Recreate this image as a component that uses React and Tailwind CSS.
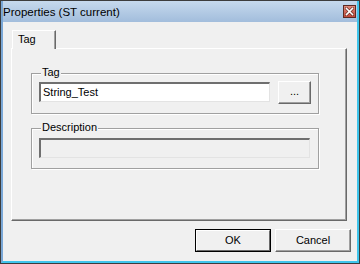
export default function App() {
  const font = { fontFamily: '"Liberation Sans", Arial, sans-serif' };
  return (
    <div className="w-[360px] h-[264px] bg-[#3c3c3c] p-px pr-px" style={font}>
      <div className="w-full h-full flex flex-col border-l-2 border-l-[#7aa7d6] border-r-2 border-r-[#3fc5ec] border-b-2 border-b-[#3fc5ec] bg-[#f0f0f0]">
        {/* Title bar */}
        <div className="h-[21px] flex items-start justify-between bg-gradient-to-b from-[#c6d9ed] to-[#a2bddc]">
          <div className="pt-[4px] text-[11.5px] leading-[15px] text-black">Properties (ST current)</div>
          <div className="mt-[4px] mr-px w-[13px] h-[13px] border border-[#5b2a22] bg-gradient-to-b from-[#e08a7c] to-[#c0483a] flex items-center justify-center">
            <svg width="9" height="9" viewBox="0 0 9 9">
              <path d="M1.5 1.5 L7.5 7.5 M7.5 1.5 L1.5 7.5" stroke="#6b2b22" strokeWidth="3" strokeLinecap="square" />
              <path d="M1.5 1.5 L7.5 7.5 M7.5 1.5 L1.5 7.5" stroke="#ffffff" strokeWidth="1.6" strokeLinecap="square" />
            </svg>
          </div>
        </div>
        {/* Body */}
        <div className="flex-1 flex flex-col pl-[8px] pt-[8px] text-[11px] text-black">
          {/* Tab strip */}
          <div className="h-[18px] flex">
            <div className="relative z-10 ml-px w-[44px] h-[19px] bg-[#f0f0f0] border-t border-l border-t-white border-l-white border-r border-r-[#696969] shadow-[inset_-1px_0_0_#a0a0a0] pl-[5px] pt-[2px] leading-[13px]">
              Tag
            </div>
          </div>
          {/* Panel */}
          <div className="w-[336px] h-[173px] border border-t-white border-l-white border-r-[#696969] border-b-[#696969] shadow-[inset_-1px_-1px_0_#a0a0a0] flex flex-col">
            {/* Tag group */}
            <div className="relative ml-[19px] mt-[24px] w-[288px] h-[41px] border border-[#a0a0a0] shadow-[inset_1px_1px_0_#ffffff,1px_1px_0_#ffffff]">
              <div className="absolute left-[9px] top-[-8px] px-px bg-[#f0f0f0] leading-[13px]">Tag</div>
              <div className="flex items-start ml-[7px] mt-[8px]">
                <div className="w-[231px] h-[20px] bg-white border-t-2 border-l-2 border-t-[#6f6f6f] border-l-[#6f6f6f] border-b border-r border-b-[#e3e3e3] border-r-[#e3e3e3] pl-[2px] leading-[16px]">
                  String_Test
                </div>
                <div className="ml-[8px] -mt-px w-[33px] h-[23px] border-t border-l border-t-white border-l-white border-r border-b border-r-[#696969] border-b-[#696969] shadow-[inset_-1px_-1px_0_#a0a0a0] flex items-start justify-center leading-[11px] pt-[4px]">
                  ...
                </div>
              </div>
            </div>
            {/* Description group */}
            <div className="relative ml-[19px] mt-[14px] w-[288px] h-[41px] border border-[#a0a0a0] shadow-[inset_1px_1px_0_#ffffff,1px_1px_0_#ffffff]">
              <div className="absolute left-[9px] top-[-8px] px-px bg-[#f0f0f0] leading-[13px]">Description</div>
              <div className="ml-[7px] mt-[9px] w-[271px] h-[20px] bg-[#f0f0f0] border-t-2 border-l-2 border-t-[#6f6f6f] border-l-[#6f6f6f] border-b border-r border-b-[#e3e3e3] border-r-[#e3e3e3]" />
            </div>
          </div>
          {/* Buttons */}
          <div className="mt-[8px] flex justify-end gap-[4px] pr-[6px]">
            <div className="w-[76px] h-[23px] border border-black">
              <div className="w-full h-full border-t border-l border-t-white border-l-white border-r border-b border-r-[#696969] border-b-[#696969] flex items-center justify-center leading-[13px]">
                OK
              </div>
            </div>
            <div className="w-[76px] h-[23px] border-t border-l border-t-white border-l-white border-r border-b border-r-[#696969] border-b-[#696969] shadow-[inset_-1px_-1px_0_#a0a0a0] flex items-center justify-center leading-[13px]">
              Cancel
            </div>
          </div>
        </div>
      </div>
    </div>
  );
}
